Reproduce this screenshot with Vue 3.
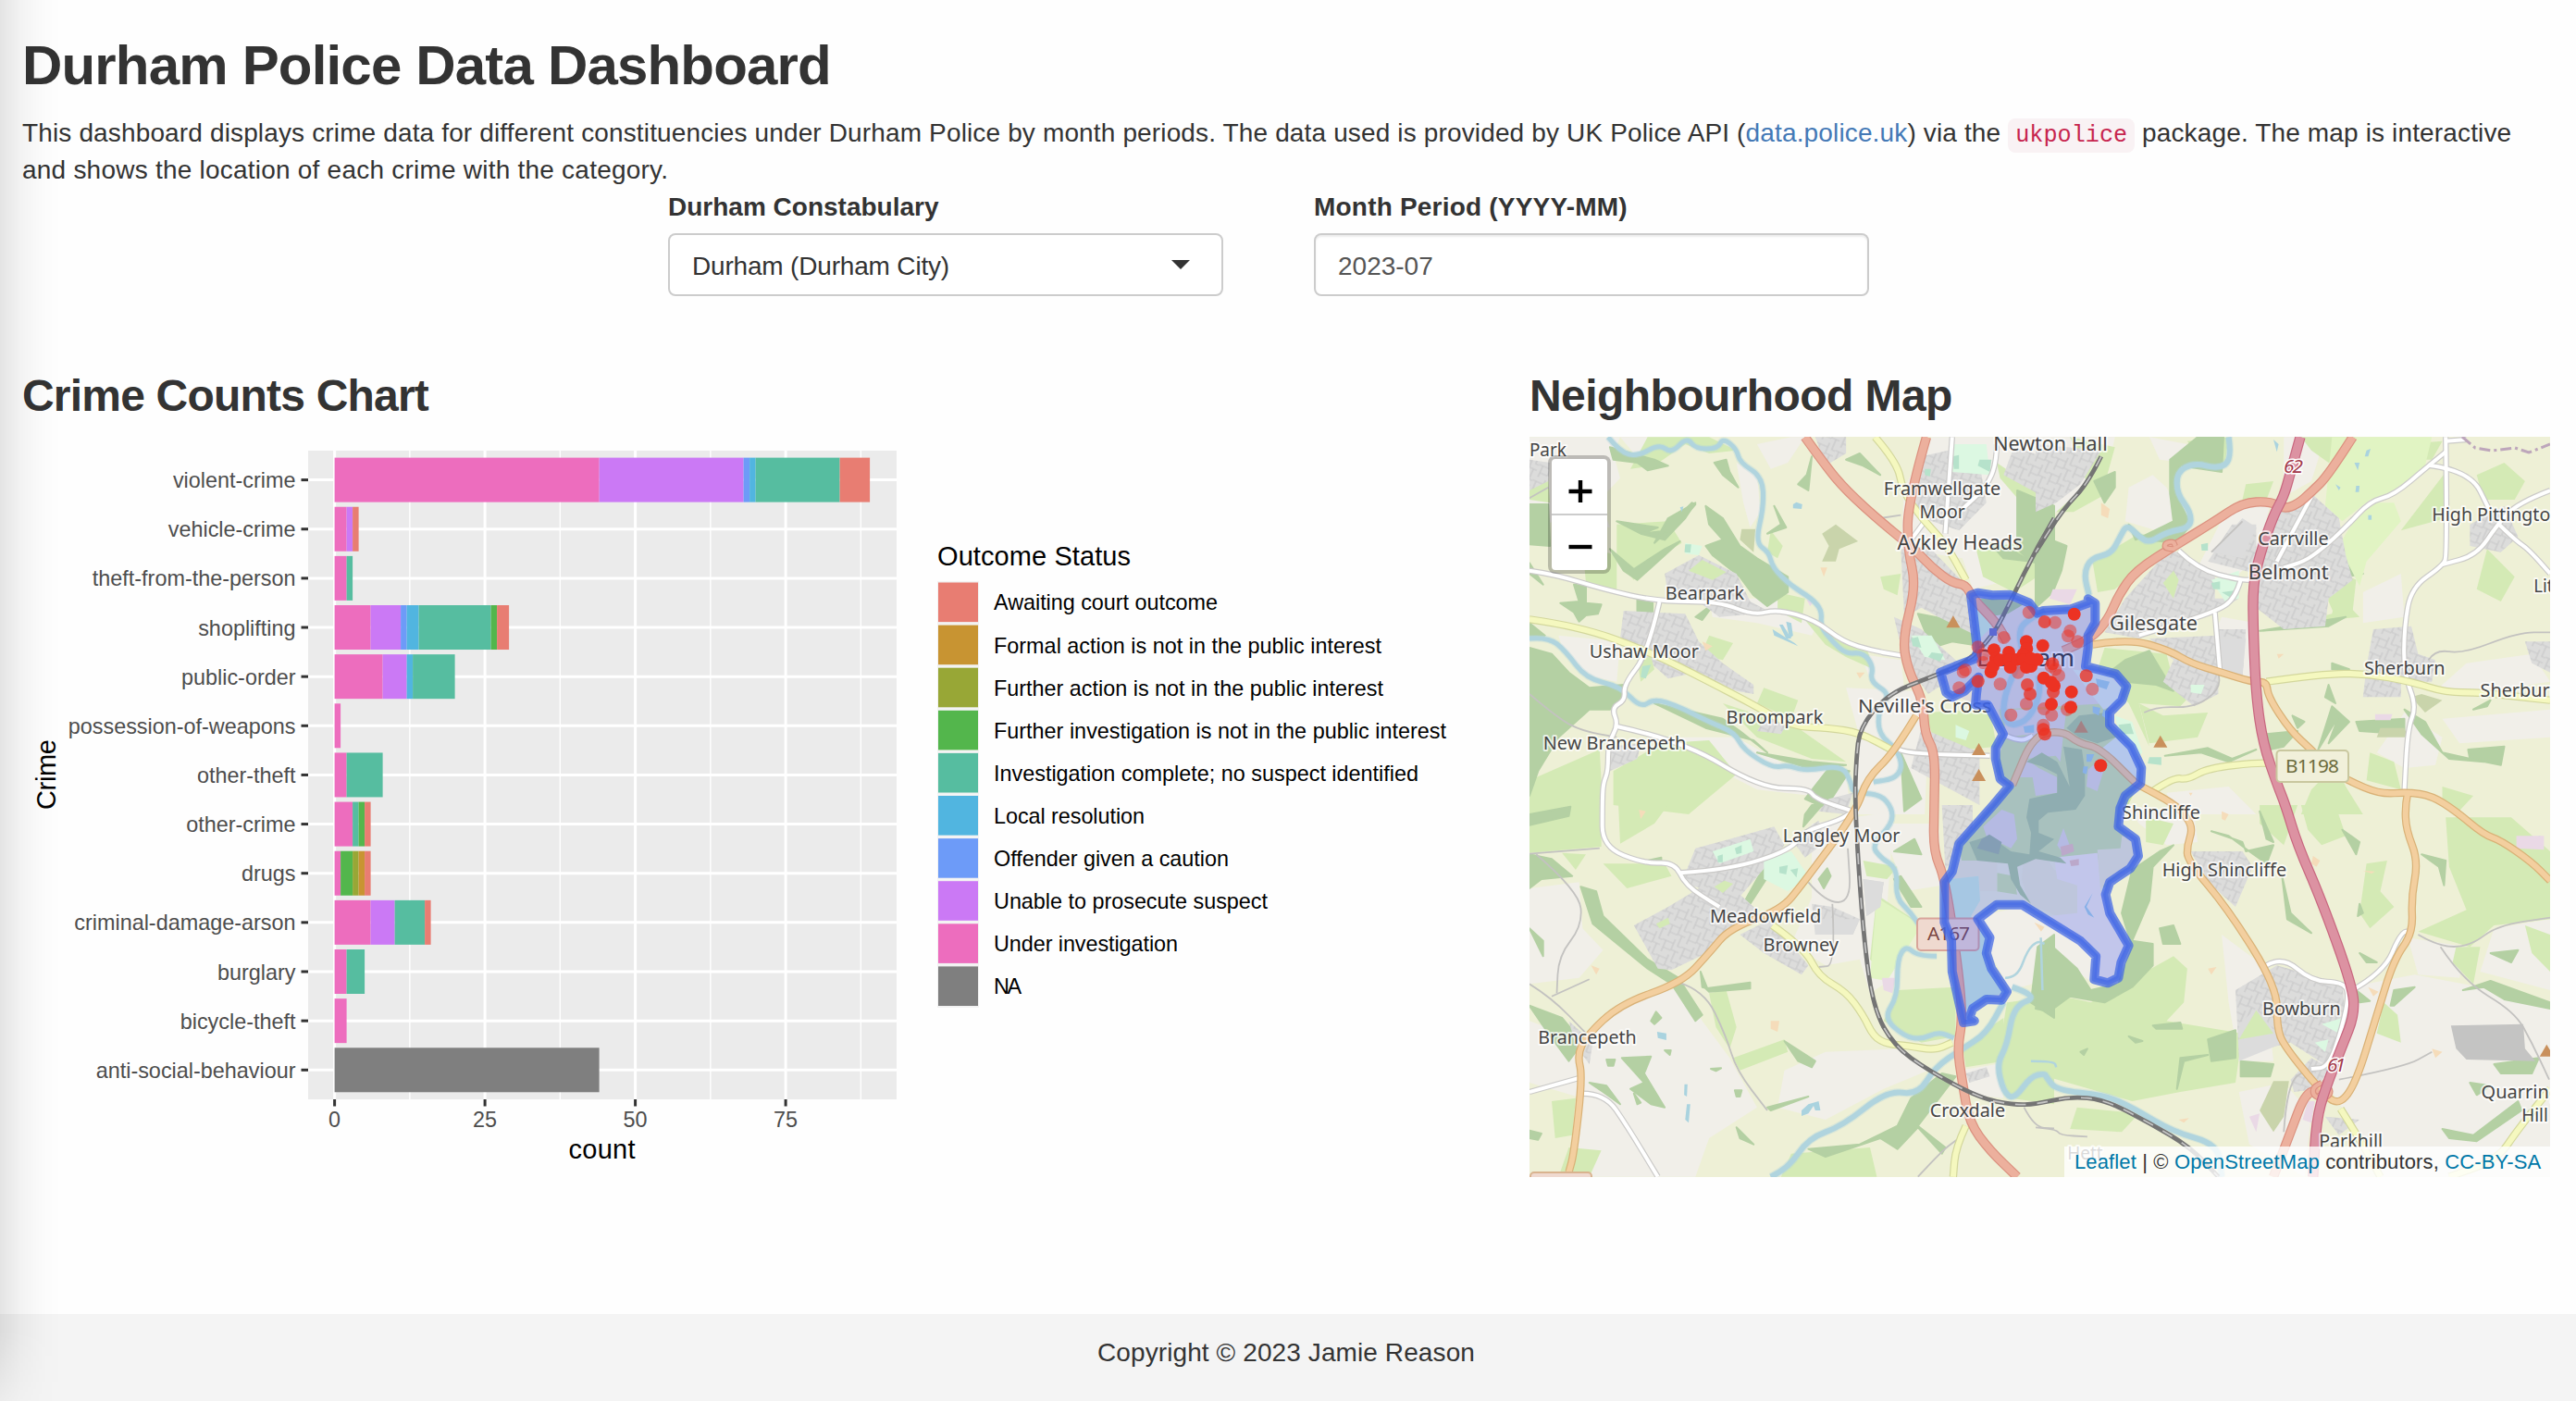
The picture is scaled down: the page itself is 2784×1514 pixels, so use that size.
<script setup>
const palette = {
  court: '#e87d72',
  formal: '#c89432',
  action: '#98a736',
  further: '#53b64c',
  complete: '#56bda0',
  local: '#51b5e0',
  caution: '#6d9bf8',
  unable: '#cb79f5',
  under: '#ed6dbe',
  na: '#7f7f7f'
}
const legend = [
  ['court', 'Awaiting court outcome', 242],
  ['formal', 'Formal action is not in the public interest', 419],
  ['action', 'Further action is not in the public interest', 421],
  ['further', 'Further investigation is not in the public interest', 489],
  ['complete', 'Investigation complete; no suspect identified', 459],
  ['local', 'Local resolution', 163],
  ['caution', 'Offender given a caution', 254],
  ['unable', 'Unable to prosecute suspect', 296],
  ['under', 'Under investigation', 199],
  ['na', 'NA', 30]
]
const rows = [
  ['violent-crime', [['under', 44], ['unable', 24], ['caution', 1], ['local', 1], ['complete', 14], ['court', 5]]],
  ['vehicle-crime', [['under', 2], ['unable', 1], ['court', 1]]],
  ['theft-from-the-person', [['under', 2], ['complete', 1]]],
  ['shoplifting', [['under', 6], ['unable', 5], ['caution', 1], ['local', 2], ['complete', 12], ['further', 1], ['court', 2]]],
  ['public-order', [['under', 8], ['unable', 4], ['local', 1], ['complete', 7]]],
  ['possession-of-weapons', [['under', 1]]],
  ['other-theft', [['under', 2], ['complete', 6]]],
  ['other-crime', [['under', 3], ['complete', 1], ['further', 1], ['court', 1]]],
  ['drugs', [['under', 1], ['further', 2], ['action', 1], ['formal', 1], ['court', 1]]],
  ['criminal-damage-arson', [['under', 6], ['unable', 4], ['complete', 5], ['court', 1]]],
  ['burglary', [['under', 2], ['complete', 3]]],
  ['bicycle-theft', [['under', 2]]],
  ['anti-social-behaviour', [['na', 44]]]
]
// Chart scales, in chart pixels
const X0 = 337.6
const UNIT = 6.5
const rowY = (i) => 46.6 + i * 53.14
const bars = rows.map(([name, parts], i) => {
  let at = 0
  return {
    name,
    y: rowY(i),
    parts: parts.map(([key, n]) => {
      const part = { x: X0 + at * UNIT, w: n * UNIT, fill: palette[key] }
      at += n
      return part
    })
  }
})

// Map sheets: each has an origin and a scale on the map canvas
const sheets = {
  A: [-13, -12, 0.3699, 1 / 3],
  B: [547, -12, 0.37245, 1 / 3],
  C: [-13, 398, 0.3699, 1 / 3],
  D: [547, 398, 0.37245, 1 / 3],
  E: [427, 288, 1 / 3, 1 / 3],
  Z: [407, 148, 1 / 3, 1 / 3]
}
function points(spec) {
  let s = 'A'
  let x = null
  const out = []
  for (const t of spec.trim().split(/\s+/)) {
    if (sheets[t]) s = t
    else if (x === null) x = +t
    else {
      const [ox, oy, sx, sy] = sheets[s]
      out.push([+(ox + x * sx).toFixed(1), +(oy + +t * sy).toFixed(1)])
      x = null
    }
  }
  return out
}
function curve(spec) {
  const p = points(spec)
  let d = `M${p[0]}`
  for (let i = 1; i < p.length - 1; i++) {
    const mx = (p[i][0] + p[i + 1][0]) / 2
    const my = (p[i][1] + p[i + 1][1]) / 2
    d += ` Q${p[i]} ${mx},${my}`
  }
  return d + ` L${p[p.length - 1]}`
}
const area = (spec) => 'M' + points(spec).join('L') + 'Z'

const areas = {
  land: [
    'A 35 37 160 37 300 37 280 90 300 170 240 240 270 330 130 300 35 340',
    'A 300 37 440 37 400 70 340 90', 'A 640 120 700 160 710 280 680 330 660 250', 'A 700 60 800 37 840 37 790 120 740 140',
    'A 1210 37 1400 37 1568 37 1568 300 1440 500 1330 530 1300 430 1120 400 1130 200', 'A 120 680 300 700 290 830 200 810 130 720',
    'A 560 560 760 560 880 640 860 680 700 640 570 620', 'A 470 1010 640 1010 800 1110 960 1120 970 1230 860 1200 700 1180 560 1100',
    'A 960 850 1160 860 1200 1000 1190 1260 980 1260 1000 1010', 'A 1000 740 1120 760 1130 850 1080 870 1030 820',
    'C 35 270 180 250 190 400 250 470 180 560 35 580', 'C 35 700 180 760 300 640 480 590 540 700 620 820 700 980 560 1080 520 1205 170 1205 190 950 35 900',
    'C 860 60 1100 20 1080 330 1160 380 1110 460 1100 560 1030 610 1000 500 900 520 800 450 860 300', 'C 780 860 900 800 1120 790 1200 860 1070 920 900 1020 760 980',
    'C 1060 60 1230 60 1240 260 1130 280 1100 180', 'C 1290 860 1400 840 1420 950 1330 940', 'C 1350 360 1470 330 1568 400 1568 560 1440 600 1390 500',
    'B 0 37 230 37 220 90 160 180 60 280 0 330', 'B 270 200 340 160 380 200 420 290 350 340 260 310', 'B 330 37 440 60 430 120 360 110',
    'B 560 260 680 260 640 430 560 510 470 460', 'B 720 37 840 37 800 180 720 230', 'B 950 540 1060 480 1070 620 950 640', 'B 1250 770 1440 740 1493 830 1300 860 1170 850',
    'B 540 620 640 640 640 830 530 800 520 670', 'B 990 1060 1070 930 1180 1010 1160 1100 1070 1110', 'B 380 1190 560 1170 640 1260 400 1260', 'B 1180 950 1493 920 1493 1010 1230 1030',
    'D 260 0 460 30 470 120 380 130 300 60', 'D 540 420 660 520 690 830 590 830 560 640', 'D 800 570 910 590 1100 550 1290 590 1493 660 1493 1205 1000 1205 900 1000 820 860',
    'D 1080 430 1250 460 1230 560 1110 550', 'D 1330 400 1493 370 1493 600 1290 540', 'D 590 930 720 900 800 1000 780 1205 620 1100', 'D 0 340 120 420 170 480 160 570 60 500 0 440'
  ],
  grass: [
    'A 380 37 560 37 640 80 560 90 490 60 400 130 330 140', 'A 290 320 440 310 480 380 390 440 340 500 290 440', 'A 190 390 290 420 290 540 200 510', 'A 560 680 630 705 600 760 535 745',
    'A 720 850 820 890 800 950 700 900', 'A 1060 490 1120 480 1110 550 1070 530', 'A 840 630 1020 720 1040 790 960 750 900 710', 'A 35 150 90 170 95 250 35 240', 'A 760 540 840 560 830 640 760 600',
    'A 280 1120 420 1030 560 1020 640 1130 500 1260 280 1230', 'A 35 1150 240 1050 250 1260 35 1260', 'A 1340 400 1460 380 1560 460 1450 540 1360 490', 'A 1400 120 1480 180 1560 260 1480 260 1410 170', 'A 1190 930 1380 920 1400 1040 1230 1060', 'A 600 900 820 980 960 1090 860 1080 700 1010', 'A 740 340 775 390 760 430 730 410', 'A 660 490 710 480 700 530',
    'C 35 60 245 0 245 135 35 155', 'C 250 190 430 190 450 230 320 270', 'C 295 0 440 0 400 60 300 125', 'C 130 155 200 160 170 210', 'C 1010 180 1110 200 1080 240 1020 230',
    'C 560 610 610 600 640 720 620 790 580 720', 'C 630 820 780 760 790 800 650 860', 'C 1110 600 1280 590 1280 750 1180 770 1070 700', 'C 1050 290 1170 380 1130 430 1080 560 1030 500', 'C 1430 640 1568 620 1568 970 1440 950 1400 840', 'C 1300 780 1420 690 1420 830 1310 850', 'C 100 960 170 950 160 1070 110 1080', 'C 150 1110 245 1120 210 1205 120 1205', 'C 800 1130 1030 1110 1050 1205 770 1205',
    'B 100 37 230 70 190 230 110 280 60 280 150 190', 'B 165 440 300 350 410 370 340 430 230 530 180 540', 'B 440 50 560 37 550 120 480 110', 'B 610 190 690 180 670 240 600 240', 'B 770 37 930 37 850 120 800 80',
    'B 650 670 850 630 940 620 870 540 930 500 860 460 900 420 870 560 860 610', 'B 840 500 930 500 920 600 870 620 850 570', 'B 1060 340 1190 150 1190 300', 'B 1280 160 1360 120 1420 180 1390 240 1300 240', 'B 1310 400 1390 490 1350 570 1280 530', 'B 200 720 380 740 400 830 470 850 420 910 300 900 330 1040 270 900 180 790', 'B 970 1060 1040 1090 1060 1180 960 1150', 'B 870 1100 900 1170 950 1260 770 1260 800 1180', 'B 1180 1170 1270 1200 1220 1260 1180 1230', 'B 1060 60 1180 50 1150 110 1070 110',
    'B 300 900 370 940 500 930 470 1010 330 1030', 'D 0 600 160 640 400 490 440 530 430 640 380 700 600 740 580 900 420 930 280 960 0 870', 'D 120 980 300 1000 250 1060 100 1050', 'D 650 0 760 0 720 130 650 60', 'D 770 0 870 0 900 100 830 130 790 80', 'D 1190 40 1380 40 1493 150 1493 370 1330 390 1260 460 1110 410 1250 340 1200 200', 'D 960 190 1020 180 1000 280 1040 330 970 400 940 350', 'D 1220 460 1290 460 1270 580 1210 510', 'D 1420 390 1493 420 1493 540 1440 480', 'D 1010 640 1050 680 1060 770 990 740', 'D 320 40 400 60 370 130 320 120'
  ],
  wood: [
    'A 550 260 600 300 650 390 700 430 790 490 790 540 730 585 690 550 650 490 570 420 550 390 600 370 560 320', 'A 35 255 90 255 95 390 35 385', 'A 125 575 180 570 165 515 200 520 200 575 245 580 235 610 200 615 180 635 165 605', 'A 350 565 395 575 395 615 350 610',
    'A 35 720 100 740 150 800 210 850 310 840 310 885 270 920 210 920 120 1010 60 1120 35 1200', 'A 35 445 75 515 35 480', 'A 270 70 400 110 440 130 380 145 350 120 280 110', 'A 270 400 340 465 430 400 475 375 350 500 310 470', 'A 430 340 510 250 520 255 430 370', 'A 575 120 610 110 620 150 645 200 600 160',
    'A 820 190 845 160 860 100 850 210', 'A 960 110 1000 90 1060 160 1010 130', 'A 750 260 785 330 730 350 770 320', 'A 400 900 600 950 650 990 730 1060 690 1020 550 980', 'A 840 1210 910 1110 970 1120 900 1240', 'A 1170 610 1240 625 1330 590 1330 710 1270 700 1210 720', 'A 1460 210 1568 260 1568 460 1500 440 1460 400', 'A 1120 1060 1180 1210 1130 1250', 'A 35 640 80 680 35 680',
    'A 290 310 410 330 365 350 440 340 400 380 440 300 520 250 490 300 430 370 360 350', 'A 580 570 540 630 520 620', 'A 700 1060 860 1090 960 1100 850 1110', 'A 1380 380 1440 400 1500 440 1420 430',
    'C 35 160 100 175 160 230 70 240 35 270', 'C 35 30 155 5 150 35 35 65', 'C 185 265 230 280 250 360 380 500 470 560 540 680 520 700 450 580 380 530 220 385', 'C 35 400 75 440 75 490', 'C 35 650 130 690 190 770 150 830 90 740', 'C 305 820 390 815 370 870 430 980 390 970 330 920 370 900', 'C 780 765 870 830 860 850 820 830', 'C 1240 870 1280 880 1170 1040 1250 1110 1240 1130 1170 1045 1110 1115 1060 1080 900 1140 850 1115 1000 1100 1110 1040 1150 950', 'C 550 595 680 575 680 595 560 605', 'C 535 540 555 595 540 590', 'C 730 980 850 945 740 990', 'C 640 1045 690 1100 650 1080', 'C 1120 230 1180 330 1150 330 1100 240', 'C 35 1055 70 1065 60 1085 35 1080', 'C 1100 150 1160 110 1180 160', 'C 880 240 905 205 915 230 895 270', 'C 1520 460 1568 420 1568 690 1500 640', 'C 210 900 260 910 300 970 250 930', 'C 860 0 890 0 835 70 840 30', 'C 380 180 420 170 420 185', 'C 390 700 405 670 420 690 400 710', 'C 730 180 750 200 680 320 660 320', 'C 635 925 655 925 650 945 640 945', 'C 430 795 448 795 445 810', 'C 565 855 595 853 580 862', 'C 260 825 285 825 280 845 265 845', 'C 340 935 360 965 350 970',
    'B 390 110 470 37 545 37 540 150 420 130 410 230 450 320 410 380 320 370 270 320 290 370 400 310 390 220', 'B 0 350 90 390 75 470 50 540 0 590', 'B 170 180 230 150 230 200 200 250', 'B 870 390 950 480 900 490', 'B 200 810 260 760 330 730 400 860 350 840 260 830', 'B 820 1050 860 910 910 960 850 1030 880 940', 'B 930 960 1070 950 1070 1000 940 990', 'B 1070 920 1130 960 1180 1060 1300 1090 1200 1080 1120 1000', 'B 1255 1050 1360 1040 1350 1100 1260 1080', 'B 670 1000 760 990 720 1040 680 1050', 'B 375 1070 500 1045 570 1080 640 1050 560 1090 480 1060', 'B 850 840 870 900 840 880', 'B 1270 920 1320 890 1310 910', 'B 650 665 900 620 850 650', 'B 860 770 910 790 860 790', 'B 745 940 780 960 760 980',
    'D 280 210 360 150 400 130 340 200 330 310 280 440 340 450 340 520 280 590 200 640 100 620 40 670 0 660 40 450 120 530 160 600 240 580 280 460 250 350', 'D 360 400 400 390 420 450 370 450', 'D 500 760 580 730 580 820 510 830', 'D 595 830 690 840 680 880 595 880', 'D 510 85 600 120 610 150 690 130 670 190 620 150 560 100', 'D 715 230 740 350 800 415 730 370', 'D 410 920 420 820 500 810 430 830', 'D 940 480 990 510 960 510', 'D 930 600 970 635 940 640', 'D 1030 650 1040 600 1100 590 1040 650', 'D 1240 600 1320 570 1493 640 1493 660 1360 630 1300 590', 'D 340 715 420 705 425 725 350 725', 'D 1320 480 1400 470 1380 510', 'D 1330 840 1460 820 1440 870 1350 870', 'D 1180 1050 1270 1070 1400 960 1410 990 1280 1090 1200 1080', 'D 890 80 940 120 930 160', 'D 940 320 950 350 935 360', 'D 650 20 690 120 670 110', 'D 270 750 310 765 290 770', 'D 130 800 150 790 140 810', 'D 1260 900 1320 910 1280 940', 'D 1120 160 1190 180 1185 260 1170 200'
  ],
  scrub: ['A 890 350 930 320 995 375 940 400 930 440 890 440 910 390', 'A 655 335 695 335 690 410 650 370', 'B 1000 980 1070 980 1080 1010 990 1010', 'D 690 895 735 895 720 1010 690 1060 650 990', 'B 1120 870 1180 890 1130 930 1090 880'],
  golf: ['B 860 37 1150 37 1130 130 1020 230 970 240 890 310 840 260', 'B 900 350 960 250 1040 250 1060 310 960 440 940 520 880 390', 'C 1050 300 1180 390 1080 570 1030 560'],
  town: [
    'A 430 480 530 420 640 480 680 570 740 605 590 620 540 580 440 550', 'A 310 600 490 610 530 700 600 770 690 840 690 870 640 860 520 800 440 820 390 770 300 690', 'A 1120 400 1200 390 1330 540 1340 680 1230 620 1180 590 1130 620', 'A 1180 100 1340 60 1370 250 1290 340 1160 290', 'A 1450 70 1568 110 1568 250 1420 160', 'A 870 37 960 37 960 90 900 130', 'A 35 110 95 120 90 180 35 210', 'A 1100 620 1180 660 1310 790 1200 870 1130 760', 'A 1180 980 1350 1060 1350 1230 1150 1110', 'A 270 1040 360 1030 350 1080 270 1120', 'A 730 940 790 960 770 1000 700 990', 'A 910 1210 980 1190 960 1260 880 1250',
    'C 340 390 440 330 590 230 700 340 570 470 450 535 410 530', 'C 520 140 620 110 750 70 780 130 640 310 480 250', 'C 650 420 740 370 850 520 830 550 720 480', 'C 1240 0 1330 0 1330 70 1250 210', 'C 1010 240 1070 250 1060 330 1020 360', 'C 860 320 920 330 1000 370 980 420 870 420', 'C 800 110 880 50 900 120 840 170', 'C 150 700 220 770 210 840 170 780', 'C 1310 870 1370 850 1380 880 1320 900',
    'B 0 60 190 80 130 190 60 250 0 280', 'B 390 400 520 470 520 560 590 560 520 610 300 690 200 670 260 560', 'B 700 280 800 220 880 300 900 420 920 500 850 560 840 650 720 660 640 590 650 440', 'B 500 440 570 320 640 320 640 480', 'B 330 690 530 680 530 870 460 910 370 830 400 760', 'B 980 660 1090 650 1110 740 1160 760 1150 830 1060 830 1060 880 950 880 960 780', 'B 1260 320 1360 260 1400 360 1350 410 1260 390', 'B 530 660 610 660 600 820 530 800', 'B 1420 700 1493 700 1493 800 1440 770',
    'D 450 150 600 150 630 200 580 330 500 250', 'D 580 600 700 520 890 580 900 700 850 850 740 770 590 810', 'D 740 890 800 820 850 850 820 920 750 930', 'D 840 1010 940 1020 880 1070'
  ],
  plain: ['D 590 710 640 660 700 740 700 780 590 830', 'B 510 410 600 300 640 330 600 430', 'C 1010 240 1070 250 1060 330 1020 360', 'C 870 370 1000 370 980 420 870 420', 'B 530 690 610 690 600 810 530 800'],
  green: ['C 575 265 605 245 630 255 600 285', 'C 405 385 440 365 445 385 415 400', 'B 370 510 400 470 415 500 400 560', 'A 500 470 540 435 610 475 570 500', 'D 590 760 640 665 690 740', 'A 350 755 390 750 400 790 360 830'],
  quarry: ['D 1205 715 1415 710 1420 790 1450 830 1250 825 1220 790'],
  sport: ['C 720 170 800 150 850 230 790 280 720 240', 'C 570 150 680 110 690 150 590 190', 'A 1150 680 1210 680 1250 760 1190 750', 'B 510 500 590 470 590 560 550 570', 'A 1270 60 1370 60 1380 160 1270 150', 'A 490 380 540 390 530 420 490 415', 'B 450 840 490 840 480 870 450 865', 'D 810 770 850 760 840 800', 'D 830 710 890 690 880 740', 'A 1280 970 1320 990 1310 1020 1280 1010', 'B 230 940 280 960 310 1060 290 1080 240 990'],
  pitch: ['C 765 200 790 195 785 225 765 220', 'C 797 210 820 205 815 235', 'C 585 165 600 160 600 185 585 185', 'C 635 140 655 130 655 155 640 160', 'B 510 510 535 505 535 530 515 530', 'B 540 540 575 535 570 560', 'A 365 780 390 775 375 820 360 815', 'A 1270 100 1290 95 1290 140 1275 140', 'A 1350 110 1385 110 1380 150 1345 130', 'A 1190 140 1208 140 1205 165 1190 160', 'A 1150 690 1170 685 1180 720 1155 715', 'A 1210 735 1245 740 1235 765 1200 750', 'A 490 385 508 385 505 412 488 410', 'B 480 385 500 380 500 405 482 405', 'B 330 1075 365 1075 365 1100 325 1095', 'B 240 970 275 965 285 1000 250 1000'],
  lake: ['A 745 660 810 705 820 715 750 680', 'A 765 645 775 645 800 690 785 690', 'A 785 635 800 640 805 680 795 690', 'A 805 255 815 248 832 255 830 270 805 268', 'C 408 735 435 740 435 762 410 755', 'C 830 990 850 970 880 960 885 990 870 990 865 975 850 1000 830 1008', 'C 488 905 497 905 495 945 487 940', 'C 495 970 505 970 500 1030 490 1020', 'D 1430 110 1465 100 1460 140 1430 140', 'B 965 290 975 290 975 305 965 305', 'B 925 120 940 120 935 145', 'B 690 45 705 60 700 85', 'B 960 80 972 75 965 100 955 100', 'B 930 195 940 195 938 215 928 215', 'B 870 190 885 200 880 210', 'A 475 265 485 262 480 280'],
  pink: ['B 50 530 120 530 100 580 40 560', 'B 985 935 1035 935 1030 955 985 955', 'C 1065 560 1105 560 1095 610 1070 600', 'D 620 1010 650 1000 640 1060', 'A 1455 600 1500 590 1490 630', 'D 1395 100 1475 100 1475 145 1395 140', 'A 845 565 865 570 855 585', 'D 790 960 810 960 800 1030 775 1020'],
  peach: ['B 190 250 215 270 210 300 190 290', 'A 885 460 905 460 895 490', 'A 540 700 570 715 550 730', 'C 740 700 765 700 760 735 740 725', 'D 1150 790 1180 800 1160 820', 'D 500 530 525 525 510 550', 'D 805 165 825 180 815 200 800 190', 'A 990 800 1015 800 1000 820', 'C 215 520 240 530 230 550', 'D 965 590 995 605 980 620', 'B 700 740 720 740 705 755', 'D 415 1020 445 1015 430 1030', 'D 540 20 560 30 550 50 540 45', 'C 355 15 375 20 360 45', 'C 1510 380 1540 395 1530 410', 'D 950 213 985 215 975 222', 'B 445 1190 455 1190 450 1200']
}
const areaOrder = Object.keys(areas)

const lines = [
  ['stream', 5, ['A 265 37 300 85 350 100 415 60 450 90 495 37 520 75 585 75 600 40 640 75 650 120 715 165 720 260 695 380 735 410 745 460 800 520 860 560 890 600 885 650 920 700 960 740 1010 735 1040 780 1030 830 1090 870 1055 920 1055 1000 1110 1050 1125 1110 1100 1145 1040 1155', 'A 35 690 90 685 140 730 200 820 300 845 360 915 400 885 470 910 560 960 635 995 660 1050 745 1110 790 1100 840 1120 950 1100 975 1160 980 1190 1060 1195 1095 1240 C 1095 60 1035 130 1060 170 1110 205 1105 300 1150 350 1180 400', 'C 1225 490 1170 490 1135 455 1110 500 1110 620 1070 690 1130 750 1180 760 1230 735 1275 755']],
  ['stream', 6, ['C 740 1205 790 1180 850 1080 950 1040 1080 925 1170 940 1220 850 1300 790 1370 740 1420 640', 'C 1445 590 1525 620 1450 650 1430 780 1400 840 1420 930 1450 955 1500 880 1540 870 D 30 880 60 925 200 940 280 980 400 1060 530 1100 540 1205', 'B 560 37 570 110 530 140 460 120 410 150 410 220 450 280 450 330 380 345 330 380 300 360 265 320 245 360 220 415 160 430 140 480 155 550', 'Z 450 120 380 155 365 200 380 260 345 330 318 400 315 470 345 495 400 470 435 390 430 330']],
  ['brook', 2.5, ['C 1425 560 1460 560 1490 470 1520 440 1540 450', 'C 1500 830 1568 830 D 60 850', 'D 15 430 20 600']],
  ['lane', 2, ['A 35 870 120 950 190 990 290 1010', 'C 35 158 240 140', 'C 55 160 180 280 190 390 120 490 115 610', 'C 35 580 100 625 200 740', 'C 100 620 210 565', 'C 470 575 545 600 610 750 640 860 730 990', 'D 1110 420 1170 460 1260 458 1340 390 1493 365', 'D 1175 460 1240 570 1390 670 1440 770 1490 890', 'D 880 890 1070 850 1150 800', 'B 1140 760 1160 725 1240 740 1400 670 1493 670', 'B 315 930 350 910 460 915 535 855 530 790', 'C 850 250 900 315 975 315 965 140', 'C 920 320 930 520 880 525', 'C 1170 1205 1240 1120 1290 1080', 'C 1480 980 1510 1045 1568 1048', 'D 0 1045 60 1050 70 1070 150 1075', 'D 720 1060 730 900 790 855', 'A 35 235 90 200', 'A 1060 300 1120 290', 'B 600 310 510 410']],
  ['minor', 4, ['A 35 470 110 482 250 530 410 570 590 570 690 615 760 595 870 630 950 700 1040 730 1120 745', 'A 415 570 380 740 310 840 315 890 275 915 295 970 265 1030 265 1120 250 1160 C 248 0 248 135 370 190 460 185 490 260 590 330', 'C 475 220 620 210 800 145 835 85 940 50 980 20', 'A 290 975 480 1020 710 1175 850 1175 870 1210 980 1250', 'A 1270 37 1250 350', 'A 1190 310 1150 370', 'A 1400 60 1400 120 1370 200 1300 270', 'A 1115 1050 1140 1063 1380 1070', 'Z 325 525 370 545 410 525', 'B 415 405 470 465 590 500 640 500', 'B 595 500 580 560 520 605 300 680', 'B 520 605 535 800', 'B 800 230 700 440', 'B 1190 37 1195 420 1180 455 1090 525 1070 650 1068 800 1105 910 1080 980 1070 1185', 'B 1493 210 1400 250 1340 320 1280 420 1180 450', 'B 1340 315 1390 370 1430 400 1493 480', 'B 1190 85 1140 130 1040 225 970 245 900 330 830 400 780 440 720 460', 'B 1140 128 1260 145 1320 280', 'B 1190 50 1250 45', 'D 670 520 715 490 800 570 890 575 910 610 890 720 850 850 800 855', 'D 910 605 1010 545 1060 410 1090 410', 'C 35 930 180 885', 'C 190 935 255 935 320 1040 410 1205']],
  ['second', 6, ['A 35 628 180 650 390 735 560 830 690 905 800 975 910 980 1000 995 1100 1055', 'A 1045 37 1110 120 1125 210 1180 300 1250 380 1310 500', 'B 670 830 830 805 960 803 1090 830 1190 865 1290 865 1493 890', 'B 340 1185 400 1140 440 1148 500 1110 650 1092 690 1097', 'C 745 390 840 465 880 555 960 605 1010 680 1040 750 1080 775 1140 780 1220 795 1270 770', 'C 1310 1040 1280 1110 1273 1205', 'D 885 985 950 1100 1000 1205', 'D 1493 920 1400 1050 1340 1150 1200 1205']],
  ['primary', 6, ['B 165 710 270 690 390 730 450 770 540 800 630 832 670 830 675 880 740 990 800 1050 850 1110 905 1150 1000 1195 1080 1188 1150 1200 1220 1250 D 1300 95 1350 115 1440 185 1493 245', 'B 1080 1190 D 1072 0 1075 80 1110 180 1090 300 1095 415 1040 500 990 680 930 900 880 975 830 930 720 780 700 720 700 590 560 340 440 180 440 130 455 80 440 40 B 400 1225 300 1165 Z 745 680 630 565 560 550 510 510 415 520 345 685', 'A 1165 940 1100 1060 1020 1145 990 1250 C 830 260 770 340 620 400 560 480 480 575 300 645 200 750 175 810 190 880 165 1130 150 1190']],
  ['trunk', 8, ['A 840 37 900 130 960 210 1070 320 1160 400 1210 460 1270 510 1310 515 1330 560 1400 640 1430 700', 'A 1195 37 1140 250 1140 400 1165 520 1125 690 1140 790 1185 890 1190 1000 1220 1060 1218 1230 C 1215 150 1250 240 1290 550 1300 700 1285 790 1300 900 1320 1030 1380 1120 1460 1205', 'B 920 37 850 160 800 215 760 255 720 270 680 245 600 250 520 310 410 385 290 470 240 550 210 630 160 690 80 730', 'D 690 1205 740 1060 780 940 820 920']],
  ['ring', 4, ['B 400 400 375 400 375 380 400 375 405 390', 'D 830 900 855 915 855 940 830 955 805 940 805 915 830 900']],
  ['motor', 9, ['B 768 37 740 150 720 230 690 290 650 420 630 520 632 680 640 880 660 1030 700 1160 725 1230 D 760 130 830 310 920 590 925 680 890 780 840 920 815 1020 805 1205']]
]
const rails = ['A 1568 300 1520 390 1440 570 1390 680 1310 770 1220 810 1080 870 1000 980 990 1080 985 1230 C 1010 420 1040 660 1100 780 1200 860 1350 950 1450 972 1514 970 D 100 945 200 955 330 1030 450 1110 530 1205', 'B 190 100 150 190 80 270 0 410']

const boundary = area('Z 210 70 232 62 280 70 335 68 400 95 425 128 445 120 535 115 598 92 590 82 613 96 613 160 590 200 590 240 582 300 680 325 715 365 700 410 660 450 660 490 730 560 763 630 760 680 B 260 1200 245 1240 D 240 70 290 110 298 165 275 205 215 250 203 290 215 350 270 455 248 510 240 560 210 577 170 565 175 490 130 440 0 350 C 1475 323 1400 323 1345 370 1380 430 1370 480 1385 530 1430 605 1415 632 1370 630 1330 660 1320 690 1335 700 1303 705 1270 540 1268 440 1247 380 1247 250 1270 215 1290 125 1390 0 Z 335 688 305 665 290 600 290 565 315 520 265 425 225 425 228 390 235 335 215 355 190 380 150 400 130 385 112 320 160 300 225 275 232 250')

// Ground cover inside the neighbourhood, from the bottom layer up
const cityGround = [
  ['#e0dcda', 'Z 215 70 335 68 425 128 595 92 613 160 585 240 582 300 700 350 660 450 600 520 320 520 265 425 225 425 150 390 112 320 232 250'],
  ['#cfe6a8', 'E 240 20 600 0 590 60 700 200 700 250 630 390 700 490 580 600 560 490 440 500 320 520 230 510 120 510 110 460 270 270 230 220 260 100'],
  ['#cfe6a8', 'E 235 550 290 560 300 620 235 610'],
  ['#ecedd0', 'E 110 510 235 510 235 610 180 610 175 560 80 570'],
  ['#ecedd0', 'E 320 510 390 495 420 540 495 590 495 690 430 690 340 650 315 570'],
  ['#f2ede5', 'E 420 500 560 485 570 600 600 680 660 790 600 900 550 890 560 800 400 690 495 680 495 590 430 570'],
  ['#ecedd0', 'E 560 475 635 470 640 430 690 440 700 500 600 570 570 600'],
  ['#e0dcda', 'E 260 20 460 20 450 100 440 190 425 170 330 180 370 210 430 240 430 290 360 300 350 240 290 240 350 100 260 110'],
  ['#e0dcda', 'E 190 400 250 345 290 360 300 440 280 470 200 430'],
  ['#e0dcda', 'E 430 460 450 405 470 460 450 490'],
  ['#e0dcda', 'E 530 215 570 180 580 220 560 285 525 270'],
  ['#dfeee6', 'E 570 150 620 110 670 140 695 200 690 250 640 220 590 170'],
  ['#dfeee6', 'Z 540 310 660 330 700 370 690 420 640 440 600 390'],
  ['#aecb97', 'E 330 190 380 160 430 190 470 270 460 200 450 140 510 150 520 220 520 300 490 345 400 355 370 380 370 420 420 440 370 480 440 500 460 520 360 505 300 530 310 590 345 650 310 620 280 570 270 520 170 510 145 450 210 430 280 480 340 490 345 420 330 370 340 310 430 290 430 230 380 205'],
  ['#aecb97', 'E 460 80 500 40 590 30 600 70 620 110 560 130 500 110'],
  ['#aecb97', 'Z 240 80 330 85 380 100 330 130 260 140'],
  ['#cdeeda', 'E 80 570 175 560 180 640 150 690 200 760 200 850 270 940 200 950 130 1000 100 960 60 700'],
  ['#cdeeda', 'Z 225 90 240 100 290 160 230 220'],
  ['#9fb79c', 'E 185 440 210 425 250 450 240 490 170 470'],
  ['#e8c4b8', 'E 440 465 480 455 485 480 445 495'],
  ['#e8c4b8', 'E 470 510 500 505 500 525 475 528'],
  ['#a3cfe0', 'E 545 615 525 660 550 695 530 685 518 660'],
  ['#a3cfe0', 'E 525 165 550 165 540 190 525 190'],
  ['#a3cfe0', 'E 515 205 530 205 525 230 512 225'],
  ['#a3cfe0', 'Z 605 430 630 435 625 460 605 450'],
  ['#a3cfe0', 'Z 640 440 665 450 655 475 635 460'],
  ['#a3cfe0', 'Z 615 340 660 350 650 375 620 365'],
  ['#a3cfe0', 'Z 380 495 415 490 415 515 385 515']
].map(([fill, s]) => [fill, area(s)])

const spot = (str) => points(str)
const crimes = [
  [0.5, spot('Z 398 125 483 158 532 185 525 202 556 220 317 207 233 238 250 262 250 288 185 318 192 312 172 370 305 358 363 320 495 330 484 310 604 374 390 422 340 458 447 438 472 458 522 440 445 491 470 300')],
  [0.78, spot('Z 449 156 233 349 393 360 402 390 584 331 450 520 445 505 475 292 477 383')],
  [1, spot('Z 545 131 443 233 390 220 391 243 285 247 333 255 290 275 275 318 282 300 305 280 335 280 338 303 360 278 380 262 380 280 405 300 425 278 390 303 405 275 446 338 470 352 480 363 536 383 471 423 534 433 631 622')]
]
const peaks = spot('A 1273 640 1348 1053 1348 1137 B 132 980 362 1028 D 1483 800')

const place = (s, x0, x1, y, text, kind = '') => {
  const [a, b] = points(`${s} ${x0} ${y} ${x1} ${y}`)
  return { text, x: a[0], y: a[1], w: +(b[0] - a[0]).toFixed(1), kind }
}
const labels = [
  place('A', 35, 143, 100, 'Park'), place('A', 1390, 1724, 82, 'Newton Hall', 'big'), place('A', 1070, 1412, 225, 'Framwellgate'), place('A', 1175, 1308, 300, 'Moor'),
  place('A', 1110, 1475, 402, 'Aykley Heads', 'big'), place('A', 432, 663, 563, 'Bearpark'), place('A', 210, 530, 753, 'Ushaw Moor'), place('A', 995, 1385, 930, "Neville's Cross"),
  place('A', 610, 893, 967, 'Broompark'), place('A', 75, 493, 1050, 'New Brancepeth'), place('B', 645, 850, 387, 'Carrville'), place('B', 617, 850, 498, 'Belmont', 'big'),
  place('B', 1150, 1526, 308, 'High Pittington'), place('B', 215, 470, 662, 'Gilesgate', 'big'), place('B', 953, 1188, 808, 'Sherburn'), place('B', 1290, 1525, 880, 'Sherburn'),
  place('B', 1445, 1502, 540, 'Lit'), place('D', 250, 478, 45, 'Shincliffe'), place('D', 367, 728, 232, 'High Shincliffe'), place('D', 658, 885, 680, 'Bowburn'),
  place('D', 822, 1007, 1110, 'Parkhill'), place('D', 1293, 1608, 950, 'Quarrington'), place('D', 1410, 1487, 1025, 'Hill'), place('D', 92, 195, 1150, 'Hett'),
  place('C', 775, 1118, 120, 'Langley Moor'), place('C', 562, 887, 382, 'Meadowfield'), place('C', 718, 938, 475, 'Browney'), place('C', 60, 348, 775, 'Brancepeth'), place('C', 1205, 1425, 1012, 'Croxdale')
]
</script>

<template>
  <div class="page">
    <main>
      <h2 class="title">Durham Police Data Dashboard</h2>
      <p class="intro">
        <span class="first">This dashboard displays crime data for different constituencies under Durham Police by month periods. The data used is provided by UK Police API (<a>data.police.uk</a>) via the <code>ukpolice</code> package. The map is interactive</span><br>
        <span class="rest">and shows the location of each crime with the category.</span>
      </p>
      <div class="filters">
        <div class="field">
          <label>Durham Constabulary</label>
          <div class="control select"><span>Durham (Durham City)</span><i class="caret"></i></div>
        </div>
        <div class="field">
          <label class="wide">Month Period (YYYY-MM)</label>
          <div class="control input"><span>2023-07</span></div>
        </div>
      </div>
      <div class="panels">
        <section class="chart-col">
          <h3 class="h-chart">Crime Counts Chart</h3>
          <svg class="chart" width="1560" height="800" viewBox="0 0 1560 800">
            <rect x="309" y="15" width="636" height="701" fill="#ebebeb" />
            <path v-for="n in 4" :key="'m' + n" :d="`M${X0 + (n - 0.5) * 162.5} 15V716`" class="grid-minor" />
            <path v-for="n in 4" :key="'M' + n" :d="`M${X0 + (n - 1) * 162.5} 15V716`" class="grid" />
            <path v-for="b in bars" :key="'g' + b.name" :d="`M309 ${b.y}H945`" class="grid" />
            <g v-for="b in bars" :key="b.name">
              <rect v-for="(p, i) in b.parts" :key="i" :x="p.x" :y="b.y - 24" :width="p.w" height="48" :fill="p.fill" />
              <path :d="`M301.5 ${b.y}H309`" class="tick" />
              <text x="295.5" :y="b.y + 8.6" text-anchor="end" class="axis">{{ b.name }}</text>
            </g>
            <g v-for="n in 4" :key="'t' + n">
              <path :d="`M${X0 + (n - 1) * 162.5} 716v7.5`" class="tick" />
              <text :x="X0 + (n - 1) * 162.5" y="746" text-anchor="middle" class="axis">{{ (n - 1) * 25 }}</text>
            </g>
            <text x="626.5" y="779.5" text-anchor="middle" class="name" textLength="72">count</text>
            <text transform="translate(36 365) rotate(-90)" text-anchor="middle" class="name" textLength="76">Crime</text>
            <text x="989" y="138.5" class="name" textLength="209">Outcome Status</text>
            <g v-for="([key, text, w], i) in legend" :key="key">
              <rect x="989" :y="156 + i * 46.1" width="45" height="46.1" fill="#f2f2f2" />
              <rect x="990" :y="157.5 + i * 46.1" width="43" height="42.6" :fill="palette[key]" />
              <text x="1050" :y="187.4 + i * 46.1" class="key" :textLength="w">{{ text }}</text>
            </g>
          </svg>
        </section>
        <section class="map-col">
          <h3 class="h-map">Neighbourhood Map</h3>
          <div class="map">
            <svg width="1103" height="800" viewBox="0 0 1103 800">
              <defs>
                <pattern id="streets" width="22" height="18" patternUnits="userSpaceOnUse" patternTransform="rotate(24)">
                  <rect width="22" height="18" fill="#dcdcdb" />
                  <path d="M0 5H13V0M13 5V12H22M4 5V18M4 13H13M18 12V18M18 0V6H22" fill="none" stroke="#c9c9c9" stroke-width="1.2" />
                </pattern>
              </defs>
              <rect width="1103" height="800" fill="#eef0d6" />
              <g v-for="k in areaOrder" :key="k" :class="k">
                <path v-for="(s, i) in areas[k]" :key="i" :d="area(s)" />
              </g>
              <path v-for="([fill, d], i) in cityGround" :key="'cg' + i" :d="d" :fill="fill" />
              <template v-for="([kind, width, list]) in lines" :key="kind + width">
                <path v-for="(s, i) in list" :key="'c' + i" :d="curve(s)" :class="['casing', kind]" :stroke-width="width + 2.4" />
                <path v-for="(s, i) in list" :key="'l' + i" :d="curve(s)" :class="['line', kind]" :stroke-width="width" />
              </template>
              <g v-for="(s, i) in rails" :key="'r' + i" fill="none">
                <path :d="curve(s)" stroke="#747474" stroke-width="4.8" />
                <path :d="curve(s)" stroke="#c4c4c4" stroke-width="1.7" stroke-dasharray="12 12" />
              </g>
              <path d="M1008 0L1022 12 1040 15 1065 12 1080 17 1103 8" fill="none" stroke="#bda6bb" stroke-width="3" stroke-dasharray="12 4 3 4" />
              <rect x="497" y="207" width="8" height="8" fill="#6a71c4" />
              <path v-for="([x, y], i) in peaks" :key="'p' + i" :d="`M${x - 7.5} ${y + 5}L${x} ${y - 8}L${x + 7.5} ${y + 5}Z`" fill="#c9905c" />
              <g class="shield">
                <rect x="807.5" y="339" width="77.5" height="34" rx="4" fill="#f1f0da" stroke="#c9c79f" stroke-width="2" />
                <text x="817" y="363" textLength="58" fill="#6b6b3c">B1198</text>
                <rect x="419" y="520.5" width="66.5" height="34.5" rx="4" fill="#efd9cf" stroke="#d8a49a" stroke-width="2" />
                <text x="430" y="544" textLength="46" fill="#7a4540">A167</text>
                <rect x="1" y="795" width="66" height="20" rx="4" fill="#efd9cf" stroke="#d9b38f" stroke-width="2" />
                <text x="815" y="39" class="junction" textLength="21">62</text>
                <text x="862" y="686" class="junction" textLength="20">61</text>
              </g>
              <g class="labels">
                <text v-for="(l, i) in labels" :key="i" :x="l.x" :y="l.y" :class="l.kind" :textLength="l.w" lengthAdjust="spacingAndGlyphs">{{ l.text }}</text>
                <text x="483" y="248" class="city" textLength="106" lengthAdjust="spacingAndGlyphs">Durham</text>
              </g>
              <path :d="boundary" class="zone-fill" />
              <path :d="boundary" class="zone-edge" />
              <path :d="boundary" class="zone-core" />
              <g v-for="([alpha, list], i) in crimes" :key="'k' + i" fill="#ec3223" :fill-opacity="alpha">
                <circle v-for="([x, y], j) in list" :key="j" :cx="x" :cy="y" r="7" />
              </g>
            </svg>
            <div class="zoom">
              <svg width="60" height="59" viewBox="0 0 60 59"><path d="M18.5 35H43.5M31 23V47" /></svg>
              <svg width="60" height="59" viewBox="0 0 60 59"><path d="M18.5 34H43.5" /></svg>
            </div>
            <div class="credit"><a>Leaflet</a> | © <a>OpenStreetMap</a> contributors, <a>CC-BY-SA</a></div>
          </div>
        </section>
      </div>
    </main>
    <footer>Copyright © 2023 Jamie Reason</footer>
    <div class="edge"></div>
  </div>
</template>

<style>
body { margin: 0; background: #fff; overflow: hidden; }
</style>

<style scoped>
.page { position: relative; width: 2784px; height: 1514px; display: flex; flex-direction: column; overflow: hidden; background: #fefefe; color: #333; font: 28px/40px "Liberation Sans", Arial, sans-serif; }
main { flex: 1; padding: 38px 24px 0; }
h2, h3, p { margin: 0; }
h2, h3 { white-space: nowrap; font-weight: 700; }
.title { font-size: 60px; line-height: 66px; letter-spacing: -0.82px; }
.intro { margin-top: 20px; white-space: nowrap; }
.intro a { color: #4479b6; }
.first { letter-spacing: 0.143px; }
.rest { letter-spacing: 0.225px; }
code { padding: 4px 8px; border-radius: 8px; background: #f9f2f4; color: #c7254e; font: 25.2px "Liberation Mono", monospace; letter-spacing: 0; }
.filters { display: flex; gap: 98px; padding-left: 698px; }
.field { width: 600px; }
label { display: block; margin-bottom: 8px; font-weight: 700; white-space: nowrap; }
.wide { letter-spacing: 0.2px; }
.control { display: flex; align-items: center; justify-content: space-between; box-sizing: border-box; width: 600px; height: 68px; padding: 3px 34px 0 24px; border: 2px solid #ccc; border-radius: 8px; background: #fff; }
.select { letter-spacing: -0.18px; }
.input { color: #555; box-shadow: inset 0 2px 2px rgba(0, 0, 0, .075); }
.caret { border: 10px solid transparent; border-top-color: #333; border-bottom: 0; margin-top: -4px; }
.panels { display: flex; margin-top: 81px; }
.chart-col { width: 1629px; }
h3 { font-size: 48px; line-height: 53px; margin-bottom: 18px; }
.h-chart { letter-spacing: -0.8px; }
.h-map { letter-spacing: -0.58px; }
.chart, .map svg { display: block; }
.chart text { font-family: "Liberation Sans", Arial, sans-serif; }
.grid { stroke: #fff; stroke-width: 3; }
.grid-minor { stroke: #fff; stroke-width: 1.4; }
.tick { stroke: #333; stroke-width: 3; }
.axis { font-size: 23.4px; fill: #4d4d4d; }
.name { font-size: 29px; fill: #000; }
.key { font-size: 23.4px; fill: #000; }
.map { position: relative; width: 1103px; height: 800px; overflow: hidden; }
.land { fill: #f1efe9; }
.grass, .green { fill: #d4eab5; }
.wood { fill: #b4d0a3; stroke: #b4d0a3; stroke-width: 2; stroke-linejoin: round; }
.scrub { fill: #c9d4ab; }
.golf { fill: #e1f4c3; }
.town { fill: url(#streets); }
.plain { fill: #dcdcdc; }
.quarry { fill: #c4c4c3; }
.sport { fill: #dcf8e2; }
.pitch { fill: #b6e2cb; }
.lake { fill: #aad3df; }
.pink { fill: #ead9e6; }
.peach { fill: #f5dcba; }
.casing, .line { fill: none; stroke-linejoin: round; stroke-linecap: butt; }
.line.stream, .casing.stream, .line.brook { stroke: #b0d4de; }
.casing.stream { stroke-opacity: .35; }
.line.lane { stroke: #c3c2c0; stroke-width: 1.8; }
.casing.lane, .casing.brook { stroke: none; }
.casing.minor { stroke: #cbcac8; }
.line.minor { stroke: #fff; }
.casing.second { stroke: #d3d79c; }
.line.second { stroke: #f5f8bf; }
.casing.primary { stroke: #d9b176; }
.line.primary { stroke: #f3cf9f; }
.casing.trunk, .casing.ring { stroke: #db917f; }
.line.trunk, .line.ring { stroke: #ecb09d; }
.casing.motor { stroke: #c8677f; }
.line.motor { stroke: #dc92a2; }
.labels text, .shield text { font-family: "Noto Sans", sans-serif; font-size: 20.8px; }
.labels text { fill: #454545; stroke: rgba(255, 255, 255, .72); stroke-width: 4px; paint-order: stroke; stroke-linejoin: round; }
.labels .big { font-size: 22.6px; }
.labels .city { font-size: 25.5px; fill: #333; }
.shield .junction { fill: #a33a4c; font-style: italic; stroke: #fff; stroke-width: 3px; paint-order: stroke; }
.zone-fill { fill: #3355ff; fill-opacity: .25; }
.zone-edge { fill: none; stroke: #3f67e6; stroke-opacity: .74; stroke-width: 10; stroke-linejoin: round; }
.zone-core { fill: none; stroke: #3b62e6; stroke-opacity: .5; stroke-width: 5; stroke-linejoin: round; }
.zoom { position: absolute; left: 20px; top: 20px; border: 4px solid rgba(0, 0, 0, .22); border-radius: 8px; background: #fff; background-clip: padding-box; }
.zoom svg + svg { border-top: 2px solid #ccc; }
.zoom path { stroke: #000; stroke-width: 4.4; }
.credit { position: absolute; right: 0; bottom: 0; box-sizing: border-box; width: 525px; height: 33px; padding-left: 11px; background: rgba(255, 255, 255, .8); font-size: 22px; line-height: 34px; letter-spacing: 0.13px; white-space: nowrap; }
.credit a { color: #0078a8; }
footer { height: 94px; box-sizing: border-box; padding: 22px 4px 0 0; text-align: center; background: #f4f4f4; letter-spacing: 0.1px; }
.edge { position: absolute; left: 0; top: 0; width: 66px; height: 100%; background: linear-gradient(90deg, rgba(0, 0, 0, .1), rgba(0, 0, 0, .045) 35%, rgba(0, 0, 0, .012) 70%, transparent); -webkit-mask-image: linear-gradient(#000 95%, rgba(0, 0, 0, .3)); mask-image: linear-gradient(#000 95%, rgba(0, 0, 0, .3)); }
</style>
